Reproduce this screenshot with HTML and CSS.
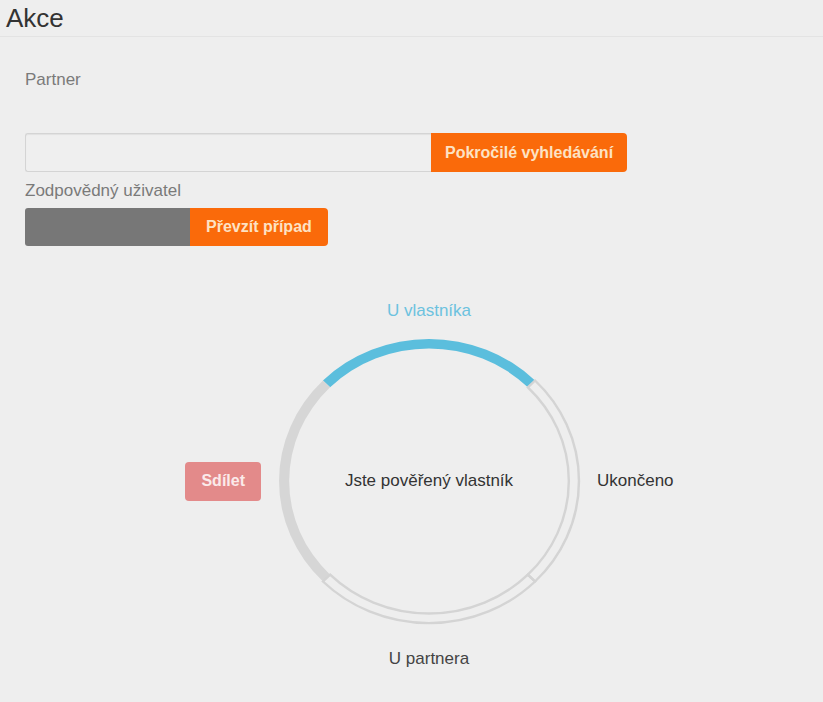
FILE: index.html
```html
<!DOCTYPE html>
<html lang="cs">
  <head>
    <meta charset="UTF-8" />
    <meta name="viewport" content="width=device-width, initial-scale=1.0" />
    <title>Akce</title>
    <link rel="stylesheet" href="styles.css">
  </head>
  <body>
    <h1 class="page-title">Akce</h1>

    <div class="content">
      <p class="label partner-label">Partner</p>

      <div class="input-group">
        <input type="text" class="search-input" />
        <button class="btn btn-orange">Pokročilé vyhledávání</button>
      </div>

      <p class="label">Zodpovědný uživatel</p>
      <div class="input-group">
        <div class="user-box"></div>
        <button class="btn btn-orange btn-take">Převzít případ</button>
      </div>

      <div class="cycle">
        <div class="cycle-top state-active">U vlastníka</div>

        <div class="cycle-left">
          <button class="btn btn-share">Sdílet</button>
        </div>

        <div class="cycle-ring">
          <svg class="ring" viewBox="-150 -150 300 300" preserveAspectRatio="none">
            <!-- top: U vlastníka (active) -->
            <path class="seg-active" d="M -104.65 -104.65 A 148 148 0 0 1 104.65 -104.65 L 97.58 -97.58 A 138 138 0 0 0 -97.58 -97.58 Z" />
            <!-- left: filled -->
            <path class="seg-done" d="M -104.65 104.65 A 148 148 0 0 1 -104.65 -104.65 L -97.58 -97.58 A 138 138 0 0 0 -97.58 97.58 Z" />
            <!-- right + bottom: empty -->
            <path class="seg-empty" d="M 104.65 -104.65 A 148 148 0 0 1 104.65 104.65 L 97.58 97.58 A 138 138 0 0 0 97.58 -97.58 Z" />
            <path class="seg-empty" d="M 104.65 104.65 A 148 148 0 0 1 -104.65 104.65 L -97.58 97.58 A 138 138 0 0 0 97.58 97.58 Z" />
          </svg>
          <span class="ring-text">Jste pověřený vlastník</span>
        </div>

        <div class="cycle-right">Ukončeno</div>

        <div class="cycle-bottom">U partnera</div>
      </div>
    </div>
  </body>
</html>
```

FILE: styles.css
```css
body {
  margin: 0;
  font-family: "Liberation Sans", Arial, sans-serif;
  font-size: 17px;
  line-height: 20px;
  background-color: #eeeeee;
  color: #333;
}
.page-title {
  margin: 3px 0 0 0;
  padding: 0 0 3px 6px;
  font-size: 26px;
  line-height: 30px;
  font-weight: normal;
  color: #333;
  border-bottom: 1px solid #e3e3e3;
}
.content {
  padding: 0 25px;
}
.label {
  margin: 0;
  color: #7a7a7a;
}
.partner-label {
  margin-top: 33px;
  margin-bottom: 43px;
}
.input-group {
  display: flex;
  height: 39px;
  margin-bottom: 9px;
}
.search-input {
  box-sizing: border-box;
  width: 406px;
  height: 39px;
  margin: 0;
  border: 1px solid #d4d4d4;
  border-right: none;
  border-radius: 3px 0 0 3px;
  background: #efefef;
  box-shadow: inset 0 1px 1px rgba(0, 0, 0, 0.06);
}
.btn {
  font-family: "Liberation Sans", Arial, sans-serif;
  font-size: 16px;
  font-weight: bold;
  border: none;
  cursor: pointer;
  margin: 0;
}
.btn-orange {
  background: #fa6a0a;
  color: #fde2c4;
  padding: 0 14px;
  border-radius: 0 4px 4px 0;
}
.user-box {
  width: 165px;
  height: 38px;
  background: #777777;
  border-radius: 3px 0 0 3px;
}
.btn-take {
  height: 38px;
  padding: 0 16px;
}
.label + .input-group {
  margin-top: 7px;
}
.cycle {
  display: grid;
  grid-template-columns: 252px 304px 1fr;
  grid-template-rows: auto 288px auto;
  margin-top: 54px;
}
.cycle-top {
  grid-column: 2;
  grid-row: 1;
  text-align: center;
  margin-bottom: 16px;
}
.state-active {
  color: #6cc2df;
}
.cycle-left {
  grid-column: 1;
  grid-row: 2;
  justify-self: end;
  align-self: center;
  margin-right: 16px;
}
.btn-share {
  background: #e38a8a;
  color: #fbeaea;
  height: 39px;
  padding: 0 16px;
  border-radius: 4px;
}
.cycle-ring {
  grid-column: 2;
  grid-row: 2;
  position: relative;
  display: flex;
  align-items: center;
  justify-content: center;
}
.ring {
  position: absolute;
  top: 0;
  left: 0;
  width: 304px;
  height: 288px;
}
.ring-text {
  position: relative;
  color: #333;
}
.seg-active {
  fill: #5bbedd;
}
.seg-done {
  fill: #d6d6d6;
}
.seg-empty {
  fill: none;
  stroke: #d4d4d4;
  stroke-width: 2.4;
}
.cycle-right {
  grid-column: 3;
  grid-row: 2;
  align-self: center;
  margin-left: 16px;
  color: #333;
}
.cycle-bottom {
  grid-column: 2;
  grid-row: 3;
  text-align: center;
  margin-top: 24px;
  color: #444;
}
```
